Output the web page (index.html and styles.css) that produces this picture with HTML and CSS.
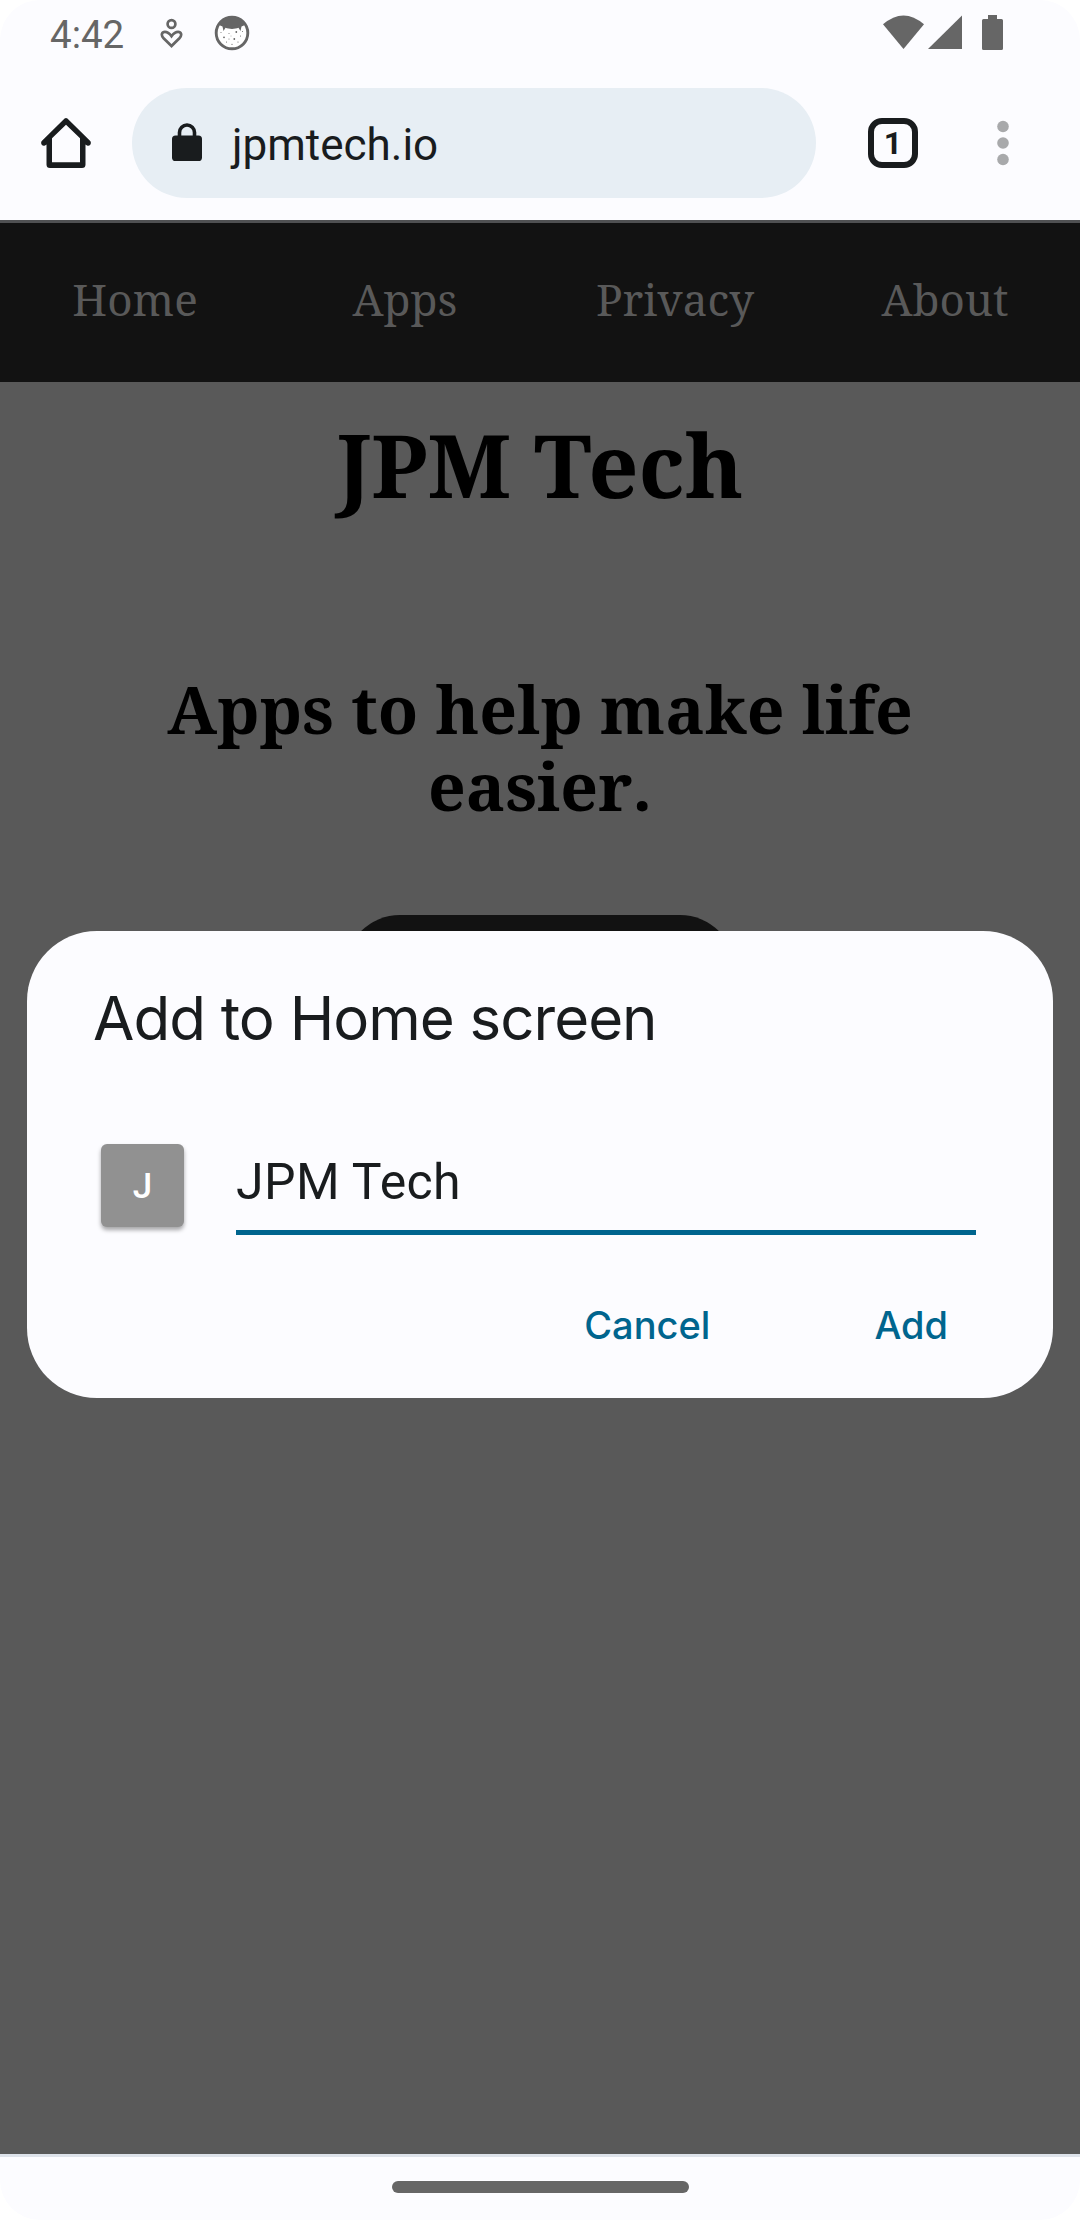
FILE: index.html
```
<!DOCTYPE html>
<html lang="en">
<head>
<meta charset="utf-8">
<title>JPM Tech</title>
<link rel="stylesheet" href="styles.css">
</head>
<body>
<div class="screen">
  <header class="chrome">
    <div class="status">
      <span class="clock">4:42</span>
      <svg class="status-heart" width="24" height="32" viewBox="0 0 24 32" fill="none" stroke="#666" stroke-width="2.7">
        <circle cx="11.5" cy="7" r="3.9"/>
        <path d="M11.5 29 L3.6 21.2 C.3 17.7 2.2 14.9 4.9 14.9 C7.8 14.9 9.6 16.6 11.5 19.2 C13.4 16.6 15.2 14.9 18.1 14.9 C20.8 14.9 22.7 17.7 19.4 21.2 Z"/>
      </svg>
      <svg class="status-face" width="36" height="36" viewBox="0 0 36 36">
        <circle cx="18" cy="18" r="15.8" fill="#fff" stroke="#666" stroke-width="2.9"/>
        <path d="M5 10 C8 4.5 12.5 2.5 18 2.5 S28 4.5 31 10 L27.5 11.5 L26.5 16 L24.5 12.8 C21 14.3 15 14.3 11.5 12.8 L9.5 16 L8.5 11.5 Z" fill="#666"/>
        <g fill="#666">
          <circle cx="22.3" cy="17" r=".9"/><circle cx="10" cy="22.3" r=".9"/><circle cx="20.3" cy="24" r=".9"/>
          <circle cx="15" cy="18.5" r=".5"/><circle cx="26.5" cy="21" r=".6"/><circle cx="7" cy="17.5" r=".5"/>
          <circle cx="15" cy="24" r=".5"/><circle cx="24" cy="27" r=".6"/><circle cx="12.5" cy="27" r=".6"/>
          <circle cx="18" cy="29.3" r=".6"/><circle cx="17" cy="21" r=".4"/><circle cx="28.5" cy="16.5" r=".5"/>
        </g>
      </svg>
      <svg class="status-system" width="124" height="36" viewBox="0 0 124 36" fill="#666">
        <path d="M3 9.3 Q23.5 -8.5 44 9.3 L23.5 34 Z"/>
        <path d="M48 34 L82 .5 V34 Z"/>
        <path d="M108 0 h9 v4 h4.5 q1.5 0 1.5 1.5 V33.5 q0 1.5 -1.5 1.5 h-18 q-1.5 0 -1.5 -1.5 V5.5 q0 -1.5 1.5 -1.5 h4.5 Z"/>
      </svg>
    </div>
    <div class="toolbar">
      <svg width="52" height="52" viewBox="0 0 52 52" fill="#191c1e" fill-rule="evenodd">
        <path d="M24.6 1.6 Q26 .4 27.400 1.600 L50.500 24.200 Q51.500 26 50.300 27.800 Q49 29.400 47 28.600 L45.500 27.400 V47.500 Q45.500 51 42 51 H10 Q6.500 51 6.500 47.500 V27.400 L5 28.600 Q3 29.400 1.700 27.800 Q.5 26 1.500 24.200 Z M26 7.800 L12 21.300 V45.300 H40 V21.300 Z"/>
      </svg>
      <div class="omnibox">
        <svg width="30" height="38" viewBox="0 0 30 38">
          <path d="M7.500 14 V9.500 a7.500 7.500 0 0 1 15 0 V14" fill="none" stroke="#191c1e" stroke-width="3.600"/>
          <rect y="12.500" width="30" height="25.500" rx="3.600" fill="#191c1e"/>
        </svg>
        <span class="url">jpmtech.io</span>
      </div>
      <div class="tabs">1</div>
      <svg class="menu" width="12" height="46" viewBox="0 0 12 46" fill="#a8a9ab">
        <circle cx="6" cy="6.500" r="5.800"/><circle cx="6" cy="23" r="5.800"/><circle cx="6" cy="39.500" r="5.800"/>
      </svg>
    </div>
  </header>
  <main class="page">
    <nav class="nav"><a>Home</a><a>Apps</a><a>Privacy</a><a>About</a></nav>
    <h1 class="site-title">JPM Tech</h1>
    <h2 class="tagline">Apps to help make life easier.</h2>
    <div class="cta"></div>
  </main>
  <footer class="gesture"><div class="handle"></div></footer>
  <section class="dialog" role="dialog">
    <div class="dialog-title">Add to Home screen</div>
    <div class="entry">
      <div class="tile">J</div>
      <div class="field">JPM Tech</div>
    </div>
    <div class="actions"><span>Cancel</span><span>Add</span></div>
  </section>
</div>
</body>
</html>
```
FILE: styles.css
```
* { box-sizing: border-box; }
body { margin: 0; background: #fff; }
svg { display: block; flex: none; }

.screen {
  position: relative;
  display: flex;
  flex-direction: column;
  width: 1080px;
  height: 2220px;
  overflow: hidden;
  border-radius: 40px;
  background: #fcfcff;
  color: #191c1e;
  font-family: Roboto, sans-serif;
}

.chrome { height: 223px; border-bottom: 3px solid #505153; }

.status {
  display: flex;
  align-items: flex-start;
  height: 88px;
  padding: 15px 76px 0 50px;
  color: #666;
}
.clock { width: 110px; font-size: 38.5px; line-height: 40px; }
.status-heart { margin-top: 2px; }
.status-face { margin-left: 30.3px; }
.status-system { margin-left: auto; }

.toolbar { display: flex; align-items: center; height: 110px; padding-left: 40px; }
.omnibox {
  display: flex;
  align-items: center;
  width: 684px;
  height: 110px;
  margin-left: 40px;
  padding-left: 40px;
  border-radius: 55px;
  background: #e7eef4;
}
.url { margin-left: 30px; padding-top: 3px; font-size: 44px; line-height: 52px; }
.omnibox svg { margin-top: -2px; }
.tabs {
  width: 50px;
  height: 50px;
  margin-left: 52px;
  border: 6px solid #191c1e;
  border-radius: 14px;
  font-size: 32px;
  font-weight: 700;
  line-height: 39px;
  text-align: center;
}
.menu { margin-left: 79px; }

.page {
  flex: 1;
  display: flex;
  flex-direction: column;
  align-items: center;
  background: #595959;
  color: #000;
  font-family: "Noto Serif", serif;
}
.nav {
  display: grid;
  grid-template-columns: repeat(4, 1fr);
  align-items: center;
  width: 100%;
  height: 159px;
  padding-bottom: 7px;
  background: #121212;
  color: #595959;
  font-size: 44px;
  line-height: 60px;
  text-align: center;
}
.nav a { font-kerning: none; }
.site-title { margin: 22px 0 0; font-size: 88px; line-height: 120px; }
.tagline {
  margin: 146px 0 0;
  padding: 0 100px;
  font-size: 66px;
  font-kerning: none;
  line-height: 77px;
  text-align: center;
}
.cta { width: 390px; height: 110px; margin-top: 91px; border-radius: 55px; background: #121212; }

.gesture {
  display: flex;
  justify-content: center;
  height: 66px;
  padding-top: 24px;
  border-top: 3px solid #dde2ea;
}
.handle { width: 297px; height: 12px; border-radius: 6px; background: #666; }

/* modal, centred over the page */
.dialog {
  position: absolute;
  top: 931px;
  left: 27px;
  width: 1026px;
  height: 467px;
  padding: 51px 77px 0 66px;
  border-radius: 70px;
  background: #fcfcff;
}
.dialog-title { font: 60px/72px Inter, sans-serif; letter-spacing: -1px; }
.entry { display: flex; align-items: flex-start; margin: 90px 0 0 8px; }
.tile {
  width: 83px;
  height: 83px;
  border-radius: 6px;
  background: #919191;
  box-shadow: 0 3px 4px rgba(0, 0, 0, .35);
  color: #fff;
  font-size: 35px;
  font-weight: 500;
  line-height: 85px;
  text-align: center;
}
.field {
  flex: 1;
  margin-left: 52px;
  padding: 8px 0 18px;
  border-bottom: 5px solid #00658e;
  font-size: 50px;
  line-height: 60px;
  letter-spacing: .4px;
}
.actions {
  display: flex;
  justify-content: flex-end;
  gap: 164px;
  margin-top: 65px;
  padding-right: 28px;
  color: #00658e;
  font: 500 38px/50px Inter, sans-serif;
}
```
